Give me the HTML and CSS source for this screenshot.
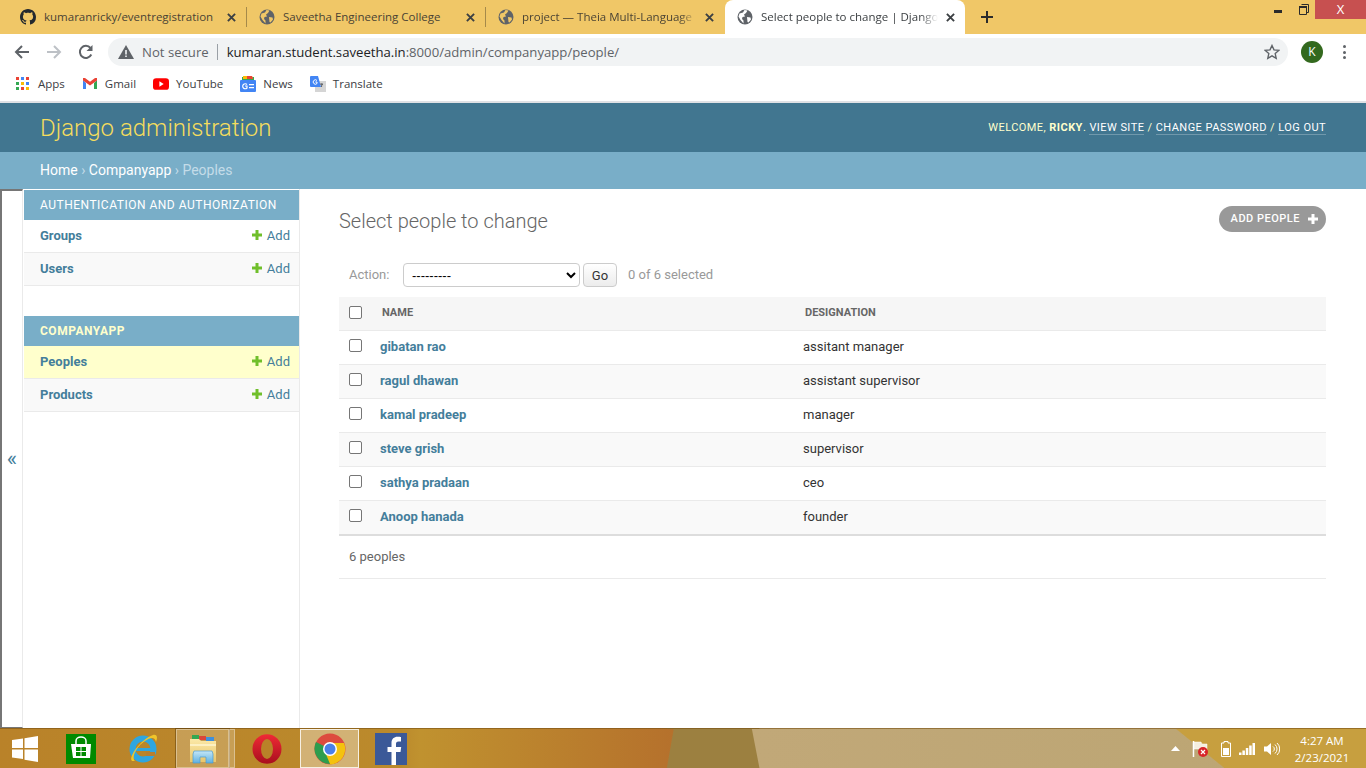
FILE: index.html
```html
<!DOCTYPE html>
<html lang="en">
<head>
  <meta charset="UTF-8">
  <title>Select people to change | Django site admin</title>
  <link rel="stylesheet" href="styles.css">
</head>
<body>

<svg class="defs" width="0" height="0">
  <defs>
    <symbol id="globe" viewBox="0 0 16 16">
      <circle cx="8" cy="8" r="7.5" fill="#5f6368"/>
      <path d="M2.5 4.5 6 3.500l1.500-2.500 3 .5L9 4 7 5.500l1 2-2.500.5L5 10l1.500 1.500v3L3.500 11 1.500 7.500zM10 8l3.500.5.500 2-2.500 3-1-.5z" fill="#f0c767"/>
    </symbol>
    <symbol id="globe-active" viewBox="0 0 16 16">
      <circle cx="8" cy="8" r="7.500" fill="#5f6368"/>
      <path d="M2.500 4.500 6 3.500l1.500-2.500 3 .5L9 4 7 5.500l1 2-2.500.5L5 10l1.500 1.500v3L3.500 11 1.500 7.500zM10 8l3.500.5.500 2-2.500 3-1-.5z" fill="#fff"/>
    </symbol>
    <symbol id="add" viewBox="0 0 12 12">
      <path d="M4.500 1h3v3.500H11v3H7.500V11h-3V7.500H1v-3h3.500z" fill="#70bf2b"/>
    </symbol>
    <linearGradient id="opera-red" x1="0" y1="0" x2="0" y2="1">
      <stop offset="0" stop-color="#f02a35"/>
      <stop offset="1" stop-color="#a80f1e"/>
    </linearGradient>
    <linearGradient id="folder-tan" x1="0" y1="0" x2="0" y2="1">
      <stop offset="0" stop-color="#fbe9a8"/>
      <stop offset="1" stop-color="#e9c66c"/>
    </linearGradient>
    <linearGradient id="folder-blue" x1="0" y1="0" x2="0" y2="1">
      <stop offset="0" stop-color="#c4e6f7"/>
      <stop offset="1" stop-color="#5fb0e0"/>
    </linearGradient>
  </defs>
</svg>

<div class="tabstrip">
  <div class="tab">
    <svg class="favicon" viewBox="0 0 16 16"><path fill="#24292e" d="M8 0C3.580 0 0 3.580 0 8c0 3.540 2.290 6.530 5.470 7.590.4.070.55-.17.550-.38 0-.19-.01-.82-.01-1.490-2.010.37-2.530-.49-2.690-.94-.09-.23-.48-.94-.82-1.130-.28-.15-.68-.52-.01-.53.630-.01 1.080.58 1.230.82.720 1.210 1.870.87 2.330.66.070-.52.280-.87.510-1.070-1.780-.2-3.640-.89-3.640-3.950 0-.87.310-1.590.820-2.150-.08-.2-.36-1.020.08-2.120 0 0 .67-.21 2.200.82.640-.18 1.320-.27 2-.27s1.360.09 2 .27c1.530-1.040 2.200-.82 2.200-.82.440 1.100.16 1.920.08 2.120.51.560.82 1.270.82 2.150 0 3.070-1.870 3.750-3.650 3.950.29.250.54.730.54 1.480 0 1.070-.01 1.930-.01 2.200 0 .21.150.46.550.38A8.010 8.010 0 0 0 16 8c0-4.420-3.580-8-8-8z"/></svg>
    <span class="tab-title">kumaranricky/eventregistration</span>
    <svg class="tab-close" viewBox="0 0 8 8"><path d="m.8.8 6.400 6.400m0-6.400L.8 7.200" stroke="#3c4043" stroke-width="1.700"/></svg>
  </div>
  <div class="tab">
    <svg class="favicon"><use href="#globe"/></svg>
    <span class="tab-title">Saveetha Engineering College</span>
    <svg class="tab-close" viewBox="0 0 8 8"><path d="m.8.8 6.400 6.400m0-6.400L.8 7.200" stroke="#3c4043" stroke-width="1.700"/></svg>
  </div>
  <div class="tab tab-last">
    <svg class="favicon"><use href="#globe"/></svg>
    <span class="tab-title">project — Theia Multi-Language</span>
    <svg class="tab-close" viewBox="0 0 8 8"><path d="m.8.8 6.400 6.400m0-6.400L.8 7.200" stroke="#3c4043" stroke-width="1.700"/></svg>
  </div>
  <div class="tab tab-active">
    <svg class="favicon"><use href="#globe-active"/></svg>
    <span class="tab-title">Select people to change | Django</span>
    <svg class="tab-close" viewBox="0 0 8 8"><path d="m.8.8 6.400 6.400m0-6.400L.8 7.200" stroke="#3c4043" stroke-width="1.700"/></svg>
  </div>
  <svg class="new-tab" viewBox="0 0 12 12"><path d="M5 0h2v5h5v2H7v5H5V7H0V5h5z" fill="#2b2b2b"/></svg>
  <div class="window-controls">
    <svg class="win-min" viewBox="0 0 8 3"><rect width="8" height="3" fill="#2b2b2b"/></svg>
    <svg class="win-restore" viewBox="0 0 10 11"><path d="M2.500.500h7v8h-2M.500 2.500h7v8h-7z" fill="none" stroke="#2b2b2b"/><rect x="0" y="2" width="8" height="2" fill="#2b2b2b"/></svg>
    <div class="win-close">X</div>
  </div>
</div>

<div class="toolbar">
  <svg class="nav-icon" viewBox="0 0 16 16"><path d="M15 8H2M8 2 2 8l6 6" fill="none" stroke="#5f6368" stroke-width="2"/></svg>
  <svg class="nav-icon" viewBox="0 0 16 16"><path d="M1 8h13M8 2l6 6-6 6" fill="none" stroke="#bdc1c6" stroke-width="2"/></svg>
  <svg class="nav-icon" viewBox="0 0 16 16"><path d="M13.300 10.500A6 6 0 1 1 12.500 4" fill="none" stroke="#5f6368" stroke-width="2"/><path d="M14.500 1v6h-6z" fill="#5f6368"/></svg>
  <div class="omnibox">
    <svg class="warn" viewBox="0 0 16 14"><path d="M8 0 16 14H0z" fill="#5f6368"/><path d="M7.200 5h1.600v4.500H7.200zM7.200 10.500h1.600v1.500H7.200z" fill="#f1f3f4"/></svg>
    <span class="not-secure">Not secure</span>
    <span class="omni-sep"></span>
    <span class="url">kumaran.student.saveetha.in<span class="url-dim">:8000/admin/companyapp/people/</span></span>
    <svg class="star" viewBox="0 0 16 16"><path d="m8 1.500 2 4.400 4.800.5-3.600 3.200 1 4.700L8 11.900l-4.200 2.400 1-4.700L1.200 6.400 6 5.900z" fill="none" stroke="#5f6368" stroke-width="1.400"/></svg>
  </div>
  <div class="avatar">K</div>
  <div class="kebab"><i></i><i></i><i></i></div>
</div>

<div class="bookmarks">
  <div class="bookmark">
    <svg class="bm-icon" viewBox="0 0 14 14">
      <rect x="0" y="0" width="3" height="3" fill="#ea4335"/><rect x="5" y="0" width="3" height="3" fill="#4285f4"/><rect x="10" y="0" width="3" height="3" fill="#ea4335"/>
      <rect x="0" y="5" width="3" height="3" fill="#34a853"/><rect x="5" y="5" width="3" height="3" fill="#fbbc05"/><rect x="10" y="5" width="3" height="3" fill="#4285f4"/>
      <rect x="0" y="10" width="3" height="3" fill="#34a853"/><rect x="5" y="10" width="3" height="3" fill="#ea4335"/><rect x="10" y="10" width="3" height="3" fill="#fbbc05"/>
    </svg>
    Apps
  </div>
  <div class="bookmark">
    <svg class="bm-icon" viewBox="0 0 14 12"><path d="M0 2v9h3V5z" fill="#4285f4"/><path d="M14 2v9h-3V5z" fill="#34a853"/><path d="M0 0v2.500l7 5 7-5V0h-2L7 3.700 2 0z" fill="#ea4335"/></svg>
    Gmail
  </div>
  <div class="bookmark">
    <svg class="bm-wide" viewBox="0 0 15 11"><rect width="15" height="11" rx="3" fill="#f00"/><path d="m6 3 4 2.500L6 8z" fill="#fff"/></svg>
    YouTube
  </div>
  <div class="bookmark">
    <svg class="bm-wide" viewBox="0 0 16 16"><path d="M2 1h12v4H2z" fill="#34a853"/><path d="M3 0h9l1 3H3z" fill="#fbbc05"/><path d="M7 0h5l1 3H7z" fill="#ea4335"/><rect y="4" width="16" height="12" rx="1" fill="#4285f4"/><path d="M9 8h5v1.200H9zM9 11h5v1.200H9z" fill="#fff"/><path d="M7 8.500A2.500 2.500 0 1 0 7 12V10H5" fill="none" stroke="#fff" stroke-width="1.200"/></svg>
    News
  </div>
  <div class="bookmark">
    <svg class="bm-wide" viewBox="0 0 16 16"><rect x="5" y="5" width="11" height="11" fill="#d5d5d5"/><path d="M0 1a1 1 0 0 1 1-1h7l3 11H1a1 1 0 0 1-1-1z" fill="#4285f4"/><path d="M7 4.500A2.200 2.200 0 1 0 7 7.500V6H5.300" fill="none" stroke="#fff" stroke-width="1"/><path d="m10 8 3 .5M12 7l-.5 4" stroke="#5f6368"/></svg>
    Translate
  </div>
</div>

<div class="page">
  <header class="admin-header">
    <div class="branding">Django administration</div>
    <div class="user-tools">
      Welcome, <strong>ricky</strong>. <a>View site</a> / <a>Change password</a> / <a>Log out</a>
    </div>
  </header>
  <div class="breadcrumbs"><a>Home</a> › <a>Companyapp</a> › Peoples</div>

  <div class="main">
    <div class="nav-toggle">«</div>
    <nav class="sidebar">
      <div class="app-module">
        <div class="module-caption">Authentication and Authorization</div>
        <div class="module-row"><a class="model">Groups</a><a class="addlink"><svg><use href="#add"/></svg>Add</a></div>
        <div class="module-row row-alt"><a class="model">Users</a><a class="addlink"><svg><use href="#add"/></svg>Add</a></div>
      </div>
      <div class="app-module">
        <div class="module-caption caption-current">Companyapp</div>
        <div class="module-row row-current"><a class="model">Peoples</a><a class="addlink"><svg><use href="#add"/></svg>Add</a></div>
        <div class="module-row row-alt"><a class="model">Products</a><a class="addlink"><svg><use href="#add"/></svg>Add</a></div>
      </div>
    </nav>

    <section class="content">
      <div class="content-head">
        <h1>Select people to change</h1>
        <a class="add-button">Add people <svg viewBox="0 0 12 12"><path d="M4.500 1h3v3.500H11v3H7.500V11h-3V7.500H1v-3h3.500z" fill="#fff"/></svg></a>
      </div>

      <div class="actions">
        <label class="action-label">Action:</label>
        <select class="action-select"><option>---------</option></select>
        <button class="go-button">Go</button>
        <span class="action-counter">0 of 6 selected</span>
      </div>

      <table class="result-list">
        <thead>
          <tr>
            <th class="check-col"><span class="check"></span></th>
            <th class="name-col">Name</th>
            <th>Designation</th>
          </tr>
        </thead>
        <tbody>
          <tr><td class="check-col"><span class="check"></span></td><td class="name-cell"><a>gibatan rao</a></td><td>assitant manager</td></tr>
          <tr><td class="check-col"><span class="check"></span></td><td class="name-cell"><a>ragul dhawan</a></td><td>assistant supervisor</td></tr>
          <tr><td class="check-col"><span class="check"></span></td><td class="name-cell"><a>kamal pradeep</a></td><td>manager</td></tr>
          <tr><td class="check-col"><span class="check"></span></td><td class="name-cell"><a>steve grish</a></td><td>supervisor</td></tr>
          <tr><td class="check-col"><span class="check"></span></td><td class="name-cell"><a>sathya pradaan</a></td><td>ceo</td></tr>
          <tr class="last-row"><td class="check-col"><span class="check"></span></td><td class="name-cell"><a>Anoop hanada</a></td><td>founder</td></tr>
        </tbody>
      </table>
      <p class="paginator">6 peoples</p>
    </section>
  </div>
</div>

<footer class="taskbar">
  <svg class="start" viewBox="0 0 26 26"><path d="M0 4 11 2.500V12H0zM12.500 2.300 26 0v12H12.500zM0 13.500h11V23L0 21.500zM12.500 13.500H26V26l-13.500-2.300z" fill="#fff"/></svg>
  <div class="task task-store">
    <svg viewBox="0 0 30 30"><rect width="30" height="30" fill="#008a00"/><path d="M5 10h20l-1 14H7z" fill="#fff"/><path d="M10 10V7a5 4 0 0 1 10 0v3" fill="none" stroke="#fff" stroke-width="1.500"/><path d="M10 13h4.500v4H10zM15.500 13H20v4h-4.500zM10 18h4.500v4H10zM15.500 18H20v4h-4.500z" fill="#008a00"/></svg>
  </div>
  <div class="task task-ie">
    <svg viewBox="0 0 32 32"><circle cx="16" cy="16" r="10.500" fill="none" stroke="#2fa6e0" stroke-width="6"/><path d="M8 15h18v3H8z" fill="#2fa6e0"/><path d="M19 19h9v4H19z" fill="#b77f2f"/><path d="M5 28C1 24 14 6 26 2c4-1 5 2 3 7C28 4 24 4 18 8 10 13 4 24 8 28z" fill="#f0c52a"/></svg>
  </div>
  <div class="task task-explorer">
    <svg viewBox="0 0 32 30"><rect x="5" y="1" width="7" height="4" fill="#33a852"/><rect x="12" y="2" width="7" height="4" fill="#d9453a"/><rect x="19" y="3" width="8" height="4" fill="#3f8fdc"/><path d="M3 5h9l2 2h15v21H3z" fill="url(#folder-tan)"/><path d="M3 11h26" stroke="#fff6d0" stroke-width="1.500"/><path d="M7 17h18l1 3v9h-7v-6h-6v6H6v-9z" fill="url(#folder-blue)" stroke="#4a9bd0" stroke-width=".7"/></svg>
    <span class="explorer-edge"></span>
  </div>
  <div class="task task-opera">
    <svg viewBox="0 0 30 30"><ellipse cx="15" cy="15" rx="14.500" ry="14.800" fill="url(#opera-red)"/><ellipse cx="15" cy="15" rx="6" ry="10" fill="#b98228"/></svg>
  </div>
  <div class="task task-chrome">
    <svg viewBox="0 0 32 32"><circle cx="16" cy="16" r="15.500" fill="#dd4b3e"/><path d="M16 16 3 24A15.500 15.500 0 0 1 2 9z" fill="#2d9d4e"/><path d="M16 10h14a15.500 15.500 0 0 1-14 21.500L9 19z" fill="#f4c20d"/><path d="M3 24 9 14l7 17A15.500 15.500 0 0 1 3 24z" fill="#2d9d4e"/><circle cx="16" cy="16" r="7" fill="#fff"/><circle cx="16" cy="16" r="5.500" fill="#4a80e8"/></svg>
  </div>
  <div class="task task-fb">
    <svg viewBox="0 0 32 32"><rect width="32" height="32" fill="#3b5998"/><path d="M21 32V19h4.500l.7-5H21v-3c0-1.500.5-2.500 2.500-2.500H26V4c-.5 0-2-.2-3.500-.2-3.500 0-6 2.200-6 6V14h-4v5h4v13z" fill="#fff"/></svg>
  </div>
  <div class="tray">
    <svg class="tray-arrow" viewBox="0 0 9 5"><path d="M4.500 0 9 5H0z" fill="#fff"/></svg>
    <svg class="tray-flag" viewBox="0 0 16 16"><path d="M1.500 0v16" stroke="#fff" stroke-width="1.500"/><path d="M2 1h7l1 2h5v6H9L8 8H2z" fill="#f5efe0" stroke="#fff" stroke-width=".5"/><circle cx="11" cy="11" r="5" fill="#d8252a"/><path d="m9 9 4 4m0-4-4 4" stroke="#fff" stroke-width="1.200"/></svg>
    <svg class="tray-battery" viewBox="0 0 10 16"><path d="M3 .5h4v1.500h2.500v13.500h-9V2H3z" fill="none" stroke="#fff"/><rect x="2" y="7" width="6" height="7" fill="#fff"/></svg>
    <svg class="tray-signal" viewBox="0 0 16 12"><rect x="0" y="9.500" width="2.500" height="2.500" fill="#fff"/><rect x="3.400" y="7.500" width="2.500" height="4.500" fill="#fff"/><rect x="6.800" y="5" width="2.500" height="7" fill="#fff"/><rect x="10.200" y="2.500" width="2.500" height="9.500" fill="#fff"/><rect x="13.500" y="0" width="2.500" height="12" fill="#fff"/></svg>
    <svg class="tray-sound" viewBox="0 0 16 14"><path d="M0 4.500h3L7 1v12L3 9.500H0z" fill="#fff"/><path d="M9 4.500a3 3 0 0 1 0 5M11 2.500a6 6 0 0 1 0 9M13 1a8 8 0 0 1 0 12" fill="none" stroke="#fff"/></svg>
    <div class="clock"><span>4:27 AM</span><span>2/23/2021</span></div>
  </div>
</footer>

</body>
</html>
```

FILE: styles.css
```css
* {
  box-sizing: border-box;
}

html, body {
  height: 100%;
}

body {
  margin: 0;
  width: 1366px;
  height: 768px;
  overflow: hidden;
  display: flex;
  flex-direction: column;
  font-family: Roboto, sans-serif;
  color: #333;
  background-color: #fff;
}

.defs {
  position: absolute;
}

/* browser chrome */
.tabstrip {
  height: 34px;
  flex: none;
  display: flex;
  align-items: center;
  padding-left: 8px;
  background-color: #f0c767;
  font-family: "Open Sans", sans-serif;
  font-size: 11.500px;
}

.tab {
  width: 239px;
  height: 34px;
  display: flex;
  align-items: center;
  padding: 0 11px 0 12px;
  color: #4a4334;
  position: relative;
}

.tab::after {
  content: "";
  position: absolute;
  right: 0;
  top: 7px;
  height: 20px;
  width: 1px;
  background-color: #a58a4a;
}

.tab-last::after,
.tab-active::after {
  display: none;
}

.tab-active {
  width: 240px;
  background-color: #fff;
  border-radius: 8px 8px 0 0;
  color: #3c4043;
}

.favicon {
  width: 16px;
  height: 16px;
  flex: none;
  margin-right: 8px;
}

.tab-title {
  flex: 1;
  padding-bottom: 2px;
  white-space: nowrap;
}

.tab-last .tab-title,
.tab-active .tab-title {
  -webkit-mask-image: linear-gradient(to right, #000 90%, transparent);
  mask-image: linear-gradient(to right, #000 90%, transparent);
}

.tab-close {
  width: 9px;
  height: 9px;
  flex: none;
  margin-left: 8px;
}

.new-tab {
  width: 12px;
  height: 12px;
  margin-left: 16px;
}

.window-controls {
  margin-left: auto;
  align-self: flex-start;
  display: flex;
  align-items: flex-start;
}

.win-min {
  width: 8px;
  height: 3px;
  margin: 10px 17px 0 0;
}

.win-restore {
  width: 10px;
  height: 11px;
  margin: 4px 6px 0 0;
}

.win-close {
  width: 51px;
  height: 19px;
  background-color: #c75050;
  color: #fff;
  font-size: 13px;
  text-align: center;
  line-height: 18px;
}

.toolbar {
  height: 34px;
  flex: none;
  display: flex;
  align-items: center;
  padding: 2px 14px 0 14px;
  background-color: #fff;
}

.nav-icon {
  width: 16px;
  height: 16px;
  margin-right: 16px;
}

.omnibox {
  width: 1180px;
  height: 28px;
  margin-left: -2px;
  display: flex;
  align-items: center;
  padding: 0 8px 0 10px;
  border-radius: 14px;
  background-color: #f1f3f4;
  font-family: "Open Sans", sans-serif;
  font-size: 13.150px;
}

.warn {
  width: 16px;
  height: 14px;
  margin-right: 8px;
}

.not-secure {
  color: #5f6368;
}

.omni-sep {
  width: 1px;
  height: 16px;
  margin: 0 9px 0 8px;
  background-color: #9aa0a6;
}

.url {
  flex: 1;
  color: #202124;
}

.url-dim {
  color: #5f6368;
}

.star {
  width: 16px;
  height: 16px;
}

.avatar {
  width: 22px;
  height: 22px;
  margin-left: 13px;
  border-radius: 50%;
  background-color: #33691e;
  color: #fff;
  font-family: "Open Sans", sans-serif;
  font-size: 12px;
  line-height: 22px;
  text-align: center;
}

.kebab {
  display: flex;
  flex-direction: column;
  gap: 2.500px;
  margin-left: 20px;
}

.kebab i {
  display: block;
  width: 3px;
  height: 3px;
  border-radius: 50%;
  background-color: #5f6368;
}

.bookmarks {
  height: 35px;
  flex: none;
  display: flex;
  align-items: center;
  gap: 17px;
  padding: 0 0 2px 15px;
  border-bottom: 2px solid #dfe1e5;
  font-family: "Open Sans", sans-serif;
  font-size: 11.500px;
  color: #3c4043;
}

.bookmark {
  display: flex;
  align-items: center;
  gap: 7px;
}

.bm-icon {
  width: 14px;
  height: 14px;
  margin: 0 1px;
}

.bm-wide {
  width: 16px;
  height: 16px;
}

/* django admin */
.page {
  flex: 1;
  min-height: 0;
  display: flex;
  flex-direction: column;
}

.admin-header {
  height: 49px;
  flex: none;
  display: flex;
  align-items: center;
  justify-content: space-between;
  padding: 0 40px;
  background-color: #417690;
  color: #ffc;
}

.branding {
  font-size: 24px;
  font-weight: 300;
  color: #f5dd5d;
}

.user-tools {
  font-size: 11px;
  letter-spacing: .45px;
  text-transform: uppercase;
}

.user-tools strong {
  font-weight: 700;
}

.user-tools a {
  color: #fff;
  border-bottom: 1px solid rgba(255, 255, 255, .25);
}

.breadcrumbs {
  height: 37px;
  flex: none;
  padding: 0 40px;
  line-height: 36px;
  background-color: #79aec8;
  color: #c4dce8;
  font-size: 14px;
}

.breadcrumbs a {
  color: #fff;
}

.main {
  flex: 1;
  min-height: 0;
  display: flex;
}

.nav-toggle {
  width: 23px;
  flex: none;
  display: flex;
  align-items: center;
  justify-content: center;
  padding-bottom: 1px;
  border-top: 2px solid #767676;
  border-left: 2px solid #767676;
  border-right: 1px solid #eaeaea;
  border-bottom: 1px solid #767676;
  color: #447e9b;
  font-size: 22px;
}

.sidebar {
  width: 277px;
  flex: none;
  padding: 1px 0 0 1px;
  border-right: 1px solid #eaeaea;
}

.app-module {
  margin-bottom: 30px;
}

.module-caption {
  height: 30px;
  padding: 0 16px;
  line-height: 30px;
  background-color: #79aec8;
  color: #fff;
  font-size: 12px;
  letter-spacing: .5px;
  text-transform: uppercase;
  white-space: nowrap;
}

.caption-current {
  color: #ffc;
  font-weight: 700;
}

.module-row {
  height: 33px;
  display: flex;
  align-items: center;
  justify-content: space-between;
  padding: 0 9px 2px 16px;
  border-bottom: 1px solid #eaeaea;
  font-size: 13px;
  color: #447e9b;
}

.row-alt {
  background-color: #f9f9f9;
}

.row-current {
  background-color: #ffc;
}

.model {
  font-weight: 700;
}

.addlink {
  display: flex;
  align-items: center;
  gap: 4px;
}

.addlink svg {
  width: 12px;
  height: 12px;
}

.content {
  flex: 1;
  min-width: 0;
  padding: 0 40px 0 39px;
}

.content-head {
  height: 74px;
  display: flex;
  justify-content: space-between;
  align-items: flex-start;
}

h1 {
  margin: 20px 0 0;
  font-size: 20px;
  font-weight: 300;
  color: #666;
}

.add-button {
  display: flex;
  align-items: center;
  gap: 7px;
  height: 26px;
  margin-top: 17px;
  padding: 0 7px 1px 12px;
  border-radius: 13px;
  background-color: #999;
  color: #fff;
  font-size: 11px;
  font-weight: 500;
  letter-spacing: .5px;
  text-transform: uppercase;
}

.add-button svg {
  width: 12px;
  height: 12px;
}

.actions {
  height: 34px;
  display: flex;
  align-items: center;
  padding: 0 0 10px 10px;
  color: #999;
  font-size: 13px;
}

.action-label {
  width: 54px;
  padding-bottom: 2px;
}

.action-select {
  width: 177px;
  height: 24px;
  padding: 0 4px;
  border: 1px solid #ccc;
  border-radius: 4px;
  background-color: #fff;
  color: #000;
  font-family: "Liberation Sans", sans-serif;
  font-size: 13px;
}

.go-button {
  width: 34px;
  height: 24px;
  margin-left: 3px;
  padding: 0;
  border: 1px solid #ccc;
  border-radius: 4px;
  background: linear-gradient(#fff, #ececec);
  color: #333;
  font-family: Roboto, sans-serif;
  font-size: 13px;
}

.action-counter {
  margin-left: 11px;
  padding-bottom: 2px;
}

.result-list {
  width: 100%;
  border-collapse: collapse;
  font-size: 13px;
  table-layout: fixed;
  border-bottom: 2px solid #ddd;
}

.result-list th {
  height: 33px;
  padding: 0 0 2px 10px;
  background-color: #f6f6f6;
  color: #666;
  font-size: 11px;
  font-weight: 700;
  text-align: left;
  text-transform: uppercase;
  border-bottom: 1px solid #eaeaea;
}

.result-list td {
  height: 34px;
  padding: 0 0 2px 8px;
  border-bottom: 1px solid #eaeaea;
  color: #333;
}

.result-list .last-row td {
  height: 35px;
}

.result-list tbody tr:nth-child(even) td {
  background-color: #f9f9f9;
}

.check-col {
  width: 33px;
}

.result-list td.check-col {
  padding: 0 0 4px 10px;
}

.result-list .name-col {
  width: 423px;
}

.result-list .name-cell {
  font-weight: 700;
  color: #447e9b;
}

.check {
  display: block;
  width: 13px;
  height: 13px;
  border: 1px solid #767676;
  border-radius: 2px;
  background-color: #fff;
}

.paginator {
  height: 43px;
  margin: 0;
  padding: 0 10px;
  line-height: 42px;
  border-bottom: 1px solid #eaeaea;
  color: #666;
  font-size: 13px;
}

/* windows taskbar */
.taskbar {
  height: 40px;
  flex: none;
  display: flex;
  align-items: center;
  background:
    linear-gradient(39deg, transparent 770px, #c79f3f 771px),
    linear-gradient(79deg, transparent 745px, #c1a878 746px, #bba573 100%),
    linear-gradient(100deg, transparent 663px, #9c8040 664px),
    linear-gradient(90deg, #b98229 0, #bb8a2c 400px, #c0922f 420px, #b5702c 680px);
  border-top: 1px solid rgba(120, 80, 20, .6);
}

.start {
  width: 26px;
  height: 26px;
  margin-left: 12px;
}

.task {
  width: 58px;
  height: 40px;
  display: flex;
  align-items: center;
  justify-content: center;
  flex: none;
}

.task svg {
  width: 32px;
  height: 32px;
}

.task-store {
  margin-left: 14px;
}

.task-store svg {
  width: 30px;
  height: 30px;
}

.task-ie {
  margin-left: 4px;
}

.task-explorer {
  width: 53px;
  height: 39px;
  margin-left: 4px;
  position: relative;
  background-color: rgba(255, 255, 255, .2);
  border: 1px solid rgba(255, 255, 255, .35);
  outline: 1px solid rgba(90, 60, 10, .5);
}

.explorer-edge {
  position: absolute;
  top: -1px;
  bottom: -1px;
  right: -7px;
  width: 6px;
  background-color: rgba(255, 255, 255, .2);
  border: 1px solid rgba(255, 255, 255, .35);
}

.task-opera {
  margin-left: 9px;
}

.task-opera svg {
  width: 30px;
  height: 30px;
}

.task-chrome {
  width: 59px;
  margin-left: 4px;
  height: 39px;
  background-color: rgba(255, 255, 255, .35);
  border: 1px solid rgba(255, 255, 255, .8);
}

.task-fb {
  margin-left: 3px;
}

.tray {
  margin-left: auto;
  display: flex;
  align-items: center;
  color: #fff;
}

.tray-arrow {
  width: 9px;
  height: 5px;
  margin-right: 12px;
}

.tray-flag {
  width: 16px;
  height: 16px;
  margin-right: 13px;
}

.tray-battery {
  width: 10px;
  height: 16px;
  margin-right: 8px;
}

.tray-signal {
  width: 16px;
  height: 12px;
  margin-right: 9px;
}

.tray-sound {
  width: 16px;
  height: 14px;
  margin-right: 7px;
}

.clock {
  width: 70px;
  margin-right: 9px;
  padding-top: 2px;
  display: flex;
  flex-direction: column;
  align-items: center;
  gap: 3px;
  font-family: "Open Sans", sans-serif;
  font-size: 11.500px;
  line-height: 14px;
}
```
